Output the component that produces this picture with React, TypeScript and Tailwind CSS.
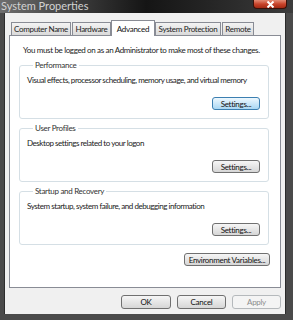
import React from "react";

const font = { fontFamily: 'Lato, "Liberation Sans", Arial, sans-serif' };

function Btn({ label, w, h = "h-[13px]", variant = "normal" }: { label: string; w: string; h?: string; variant?: "normal" | "focus" | "disabled" }) {
  const look =
    variant === "focus"
      ? "border-[#3c7fb1] bg-gradient-to-b from-[#eef8fe] to-[#a9d7f3] text-[#111]"
      : variant === "disabled"
      ? "border-[#b5b9bc] bg-[#f4f4f4] text-[#8d8d8d]"
      : "border-[#707070] bg-gradient-to-b from-[#f6f6f6] to-[#d6d6d6] text-[#111]";
  return (
    <div className={`${w} ${h} rounded-[3px] border flex items-center justify-center text-[8px] tracking-[-0.3px] leading-none whitespace-nowrap ${look}`}>
      {label}
    </div>
  );
}

function Group({ title, text, focus }: { title: string; text: string; focus?: boolean }) {
  return (
    <fieldset className="min-w-0 border border-[#d5dfe5] rounded-[3px] px-[8px] pb-[8px]">
      <legend className="ml-[5px] px-[2px] text-[8px] tracking-[-0.3px] leading-[12px] text-[#333]">{title}</legend>
      <div className="pt-[3px] text-[8px] tracking-[-0.45px] leading-[12px] text-[#1a1a1a] -ml-[1px] whitespace-nowrap">{text}</div>
      <div className="flex justify-end mt-[11px]">
        <Btn label="Settings..." w="w-[48px]" variant={focus ? "focus" : "normal"} />
      </div>
    </fieldset>
  );
}

function Tab({ label, w, active }: { label: string; w: string; active?: boolean }) {
  return active ? (
    <div className={`${w} h-[16px] -mb-[1px] -mx-[1px] relative z-10 bg-white border border-b-0 border-[#898c95] flex items-center justify-center text-[8px] tracking-[-0.3px] text-[#111] whitespace-nowrap`}>
      {label}
    </div>
  ) : (
    <div className={`${w} h-[13px] bg-gradient-to-b from-[#f3f3f3] to-[#dadada] border border-b-0 border-[#898c95] flex items-center justify-center text-[8px] tracking-[-0.3px] text-[#222] whitespace-nowrap`}>
      {label}
    </div>
  );
}

export default function App() {
  return (
    <div className="w-[293px] h-[320px] flex flex-col bg-[#4a4a4a] overflow-hidden" style={font}>
      {/* title bar */}
      <div className="h-[13px] flex items-start justify-between pl-[1px] pr-[6px] bg-gradient-to-r from-[#6e6e6e] via-[#151515] to-[#3c3c3c]">
        <span className="text-[11px] leading-[11px] text-[#d2d2d2]">System Properties</span>
        <div className="w-[34px] h-[9px] rounded-b-[4px] border border-t-0 border-[#3a1008] bg-gradient-to-b from-[#e08a74] via-[#c8432a] to-[#a22a14] flex items-center justify-center">
          <svg width="9" height="7" viewBox="0 0 9 7">
            <path d="M1.5 0.5 L7.5 6.5 M7.5 0.5 L1.5 6.5" stroke="#fff" strokeWidth="2" />
          </svg>
        </div>
      </div>

      {/* window body */}
      <div className="flex-1 flex ml-[4px] mr-[7px] mb-[6px] border-r border-[#2a2a2a]">
        <div className="flex-1 min-w-0 flex flex-col bg-[#f0f0f0] px-[4px] pb-[4px] border-l border-[#2d2d2d]">
          <div className="flex items-end pt-[7px] pl-[2px]">
            <Tab label="Computer Name" w="w-[60px]" />
            <div className="w-[1px]" />
            <Tab label="Hardware" w="w-[39px]" />
            <div className="w-[1px]" />
            <Tab label="Advanced" w="w-[44px]" active />
            <div className="w-[1px]" />
            <Tab label="System Protection" w="w-[66px]" />
            <div className="w-[1px]" />
            <Tab label="Remote" w="w-[32px]" />
          </div>

          <div className="h-[253px] min-w-0 bg-white border border-[#898c95] flex flex-col px-[9px] pr-[11px]">
            <div className="pt-[8px] pl-[4px] text-[8px] tracking-[-0.35px] leading-[12px] text-[#1a1a1a] whitespace-nowrap">
              You must be logged on as an Administrator to make most of these changes.
            </div>
            <div className="mt-[3px]">
              <Group title="Performance" text="Visual effects, processor scheduling, memory usage, and virtual memory" focus />
            </div>
            <div className="mt-[3px]">
              <Group title="User Profiles" text="Desktop settings related to your logon" />
            </div>
            <div className="mt-[3px]">
              <Group title="Startup and Recovery" text="System startup, system failure, and debugging information" />
            </div>
            <div className="flex justify-end mt-[8px] -mr-[1px]">
              <Btn label="Environment Variables..." w="w-[86px]" />
            </div>
          </div>

          <div className="flex justify-end gap-[6px] mt-[7px]">
            <Btn label="OK" w="w-[50px]" h="h-[14px]" />
            <Btn label="Cancel" w="w-[49px]" h="h-[14px]" />
            <Btn label="Apply" w="w-[49px]" h="h-[14px]" variant="disabled" />
          </div>
        </div>
      </div>
    </div>
  );
}
